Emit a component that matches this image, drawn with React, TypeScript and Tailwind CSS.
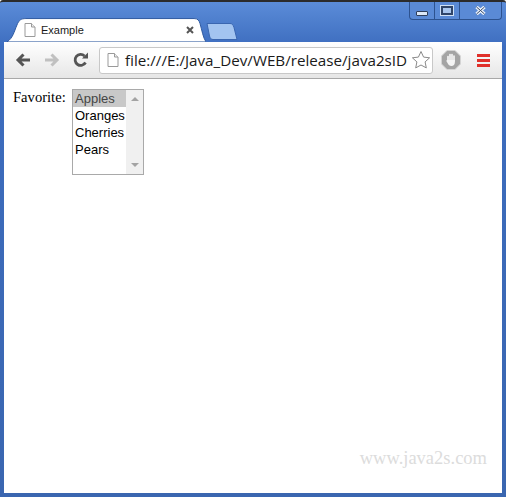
import { useState } from "react";

const FileIcon = ({ className }: { className: string }) => (
  <svg viewBox="0 0 12 14" className={className}>
    <path d="M1 .5h6.5L11 4v9.5H1z" fill="#fff" stroke="#9a9a9a" />
    <path d="M7.5 .5V4H11" fill="#eee" stroke="#9a9a9a" />
  </svg>
);

const fruits = ["Apples", "Oranges", "Cherries", "Pears"];

const App = () => {
  const [selected] = useState("Apples");
  return (
    <div className="w-[506px] h-[497px] flex flex-col overflow-hidden bg-gradient-to-b from-[#5b8cd8] via-[#3d6dbf] via-[9%] to-[#3a66b0] border-t-2 border-[#2b2b2b] rounded-t-[3px] font-['Liberation_Sans',sans-serif]">
      {/* title bar */}
      <div className="h-10 shrink-0 flex items-start justify-between pl-[7px] pr-[4px]">
        <div className="flex items-end h-full">
          <div className="relative w-[199px] h-6 mt-4 flex items-center pl-[17px] pr-[10px] mb-0">
            <svg viewBox="0 0 200 24" className="absolute inset-0 w-full h-full">
              <path d="M0 24C6 20 7 14 10 7 12 2 14 .5 19 .5H188c4 0 5 2 6 5 2 7 3 14 6 18.500z" fill="#fff" stroke="#2f5aa0" />
            </svg>
            <FileIcon className="relative w-3 h-[14px] shrink-0" />
            <span className="relative ml-[5px] text-[11px] text-[#1a1a1a] font-['Liberation_Sans',sans-serif]">Example</span>
            <svg viewBox="0 0 8 8" className="relative ml-auto mr-[2px] w-2 h-2">
              <path d="M1 1l6 6M7 1L1 7" stroke="#555" strokeWidth="2" />
            </svg>
          </div>
          <svg viewBox="0 0 32 17" className="w-8 h-[17px] mb-[2px]">
            <path d="M1 .5H24c2 0 3 1 4 4l3 12H7C5 16.500 4 15 3.500 13z" fill="#a3c4f0" stroke="#3a66b0" />
          </svg>
        </div>
        <div className="flex h-[18px] w-[93px] border border-t-0 border-[#2d528f] rounded-b-[4px] bg-[#5a8ad6]">
          <div className="w-[25px] flex items-end justify-center pb-[3px] border-r border-[#2d528f]">
            <div className="w-[12px] h-[5px] bg-[#dce8f8] border border-[#2f3f5c] rounded-[1px]" />
          </div>
          <div className="w-[25px] flex items-center justify-center border-r border-[#2d528f]">
            <div className="w-[12px] h-[9px] border-2 border-[#2f4468] bg-[#a9c6ee] outline outline-[#cfe0f5]" />
          </div>
          <div className="flex-1 flex items-center justify-center">
            <svg viewBox="0 0 11 9" className="w-[11px] h-[9px]">
              <path d="M1.500 1l8 7M9.500 1l-8 7" stroke="#e8f0fb" strokeWidth="3.400" />
              <path d="M1.500 1l8 7M9.500 1l-8 7" stroke="#3a4a66" strokeWidth="1" />
            </svg>
          </div>
        </div>
      </div>

      {/* browser chrome + page */}
      <div className="flex-1 mx-1 mb-[4px] flex flex-col bg-white">
        <div className="h-[37px] shrink-0 flex items-center bg-gradient-to-b from-white to-[#e6e6e6] border-b border-[#a8a8a8] pl-[11px] pr-[10px]">
          <svg viewBox="0 0 16 14" className="w-4 h-[14px]">
            <path d="M15 7H4M8.500 1.500 3 7l5.500 5.500" fill="none" stroke="#555" strokeWidth="3" />
          </svg>
          <svg viewBox="0 0 16 14" className="w-4 h-[14px] ml-[13px]">
            <path d="M1 7h11M7.500 1.500 13 7l-5.500 5.500" fill="none" stroke="#c0c0c0" strokeWidth="3" />
          </svg>
          <svg viewBox="0 0 16 16" className="w-4 h-4 ml-[13px]">
            <path d="M12.500 10.500A5.500 5.500 0 1 1 11.500 4" fill="none" stroke="#555" strokeWidth="2.800" />
            <path d="M9 6.500h6v-6z" fill="#555" />
          </svg>
          <div className="ml-[10px] w-[334px] h-[27px] flex items-center bg-white border border-[#c8c8c8] rounded-[3px] pl-[7px]">
            <FileIcon className="w-3 h-[14px] shrink-0" />
            <span className="ml-[6px] w-[284px] whitespace-nowrap text-[15.200px] text-[#1a1a1a] font-['Open_Sans',sans-serif]">file:///E:/Java_Dev/WEB/release/java2sID</span>
            <svg viewBox="0 0 20 20" className="ml-[2px] w-[20px] h-[20px] shrink-0">
              <path d="m10 1.500 2.600 5.600 6 .7-4.500 4.100 1.200 6L10 15l-5.300 2.900 1.200-6L1.400 7.800l6-.7z" fill="#fff" stroke="#8a8a8a" />
            </svg>
          </div>
          <svg viewBox="0 0 20 20" className="ml-[8px] w-5 h-5 shrink-0">
            <path d="M6 .5h8L19.500 6v8L14 19.500H6L.5 14V6z" fill="#a4a4a4" stroke="#d4d4d4" />
            <path d="M7 6.500V11M9 4.500V10M11 4.500V10M13 6V11" stroke="#f4f4f4" strokeWidth="1.700" strokeLinecap="round" />
            <path d="M6.200 10H13.900V12C13.900 14.500 12.500 16 10.500 16 8.500 16 7.500 15 6.800 13.500L5.200 10.800z" fill="#f4f4f4" />
          </svg>
          <div className="ml-[16px] w-[13px] flex flex-col gap-[2px] shrink-0">
            <div className="h-[3px] bg-[#e0302a]" />
            <div className="h-[3px] bg-[#e0302a]" />
            <div className="h-[3px] bg-[#e0302a]" />
          </div>
        </div>

        <div className="flex-1 relative flex items-start pt-[10px] pl-[9px]">
          <span className="w-[59px] text-[14.600px] leading-[16px] text-black font-['Liberation_Serif',serif]">Favorite:</span>
          <div className="w-[72px] h-[86px] flex bg-white border border-[#a9a9a9]">
            <div className="flex-1 flex flex-col text-[13px] leading-[17px] text-black font-['Liberation_Sans',sans-serif]">
              {fruits.map((f) => (
                <div key={f} className={f === selected ? "pl-[2px] bg-[#c8c8c8] text-[#444]" : "pl-[2px]"}>
                  {f}
                </div>
              ))}
            </div>
            <div className="w-[17px] flex flex-col items-center justify-between py-[7px] bg-[#f0f0f0]">
              <div className="w-0 h-0 border-x-[4px] border-x-transparent border-b-[4px] border-b-[#a3a3a3]" />
              <div className="w-0 h-0 border-x-[4px] border-x-transparent border-t-[4px] border-t-[#a3a3a3]" />
            </div>
          </div>
          <span className="absolute right-[15px] bottom-[23px] text-[18.500px] leading-[24px] text-[#dcdcdc] font-['Liberation_Serif',serif]">www.java2s.com</span>
        </div>
      </div>
    </div>
  );
};

export default App;
